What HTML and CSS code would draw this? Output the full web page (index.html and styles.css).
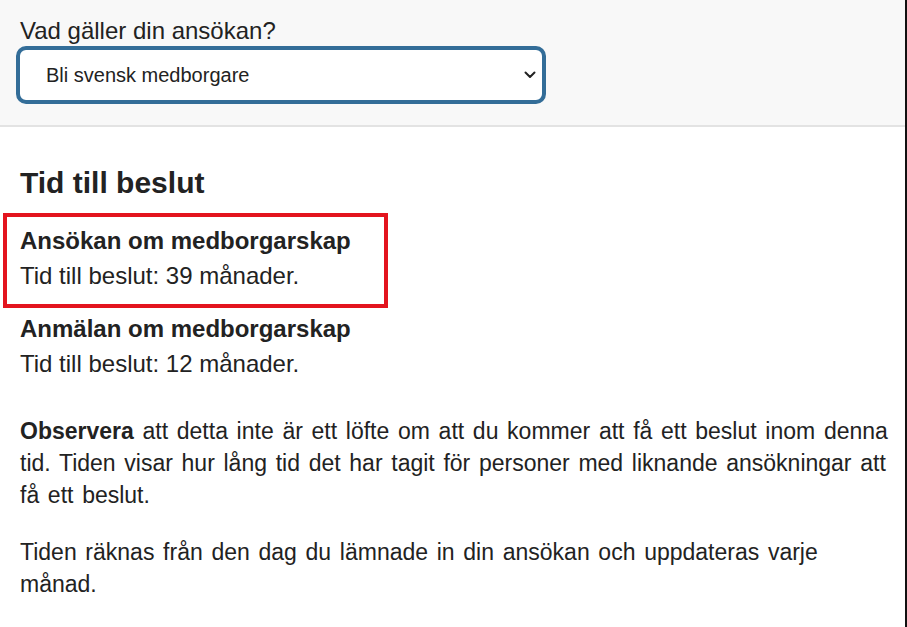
FILE: index.html
```html
<!DOCTYPE html>
<html lang="sv">
<head>
<meta charset="utf-8">
<title>Tid till beslut</title>
<link rel="stylesheet" href="styles.css">
</head>
<body>
<div class="page">
  <header class="filter">
    <label class="filter-label" for="typ">Vad gäller din ansökan?</label>
    <div class="select-wrap">
      <select id="typ" class="select">
        <option>Bli svensk medborgare</option>
      </select>
      <svg class="chevron" width="12" height="8" viewBox="0 0 12 8" aria-hidden="true"><path d="M1.5 1.5 L6 6 L10.5 1.5" fill="none" stroke="#222" stroke-width="2" stroke-linecap="round" stroke-linejoin="round"/></svg>
    </div>
  </header>
  <main class="content">
    <h2 class="title">Tid till beslut</h2>
    <div class="item">
      <h3 class="item-title">Ansökan om medborgarskap</h3>
      <p class="item-text">Tid till beslut: 39 månader.</p>
    </div>
    <div class="item">
      <h3 class="item-title">Anmälan om medborgarskap</h3>
      <p class="item-text">Tid till beslut: 12 månader.</p>
    </div>
    <p class="note"><strong>Observera</strong> att detta inte är ett löfte om att du kommer att få ett beslut inom denna tid. Tiden visar hur lång tid det har tagit för personer med liknande ansökningar att få ett beslut.</p>
    <p class="note">Tiden räknas från den dag du lämnade in din ansökan och uppdateras varje månad.</p>
    <div class="highlight"></div>
  </main>
</div>
</body>
</html>
```
FILE: styles.css
```css
html, body {
  margin: 0;
  padding: 0;
  background: #fff;
}
body {
  font-family: "Liberation Sans", Arial, sans-serif;
  color: #222;
}
.page {
  width: 905px;
  min-height: 627px;
  border-right: 2px solid #111;
  position: relative;
}
.filter {
  background: #f8f8f8;
  border-bottom: 2px solid #e3e3e3;
  padding: 17px 0 20px 16px;
  height: 88px;
  box-sizing: content-box;
}
.filter-label {
  display: block;
  font-size: 24px;
  line-height: 28px;
  padding-left: 4px;
  color: #222;
  margin-bottom: 1px;
}
.select-wrap {
  position: relative;
  width: 530px;
  height: 58px;
}
.select {
  appearance: none;
  -webkit-appearance: none;
  width: 530px;
  height: 58px;
  box-sizing: border-box;
  border: 4px solid #336d98;
  border-radius: 10px;
  background: #fff;
  font-family: "Liberation Sans", Arial, sans-serif;
  font-size: 20px;
  color: #222;
  padding: 0 0 0 26px;
  outline: none;
}
.chevron {
  position: absolute;
  right: 10px;
  top: 25px;
  pointer-events: none;
}
.content {
  position: relative;
  padding: 0 5px 0 20px;
}
.title {
  font-size: 30px;
  font-weight: bold;
  line-height: 36px;
  margin: 0;
  padding-top: 38px;
  padding-bottom: 22px;
}
.item {
  margin-bottom: 18px;
}
.item-title {
  font-size: 24px;
  font-weight: bold;
  line-height: 35px;
  margin: 0;
}
.item-text {
  font-size: 24px;
  line-height: 35px;
  margin: 0;
}
.note {
  font-size: 23px;
  line-height: 32px;
  margin: 34px 0 0 0;
  word-spacing: 2.3px;
}
.note + .note {
  margin-top: 25px;
}
.highlight {
  position: absolute;
  left: 3px;
  top: 86px;
  width: 385px;
  height: 95px;
  box-sizing: border-box;
  border: 4px solid #e3141e;
  pointer-events: none;
}
```
